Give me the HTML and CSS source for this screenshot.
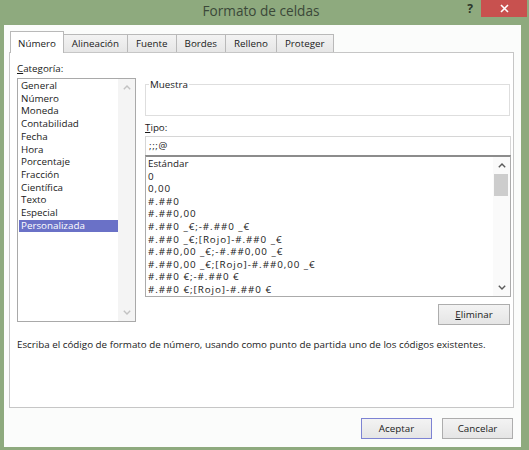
FILE: index.html
```html
<!DOCTYPE html>
<html lang="es">
<head>
<meta charset="utf-8">
<title>Formato de celdas</title>
<link rel="stylesheet" href="styles.css">
</head>
<body>
<div class="window">
  <div class="titlebar">
    <div class="title">Formato de celdas</div>
    <div class="help">?</div>
    <div class="close">
      <svg width="9" height="9" viewBox="0 0 9 9"><path d="M1 1L8 8M8 1L1 8" stroke="#fff" stroke-width="1.6" fill="none"/></svg>
    </div>
  </div>
  <div class="client">
    <div class="tabs">
      <div class="tab sel">Número</div>
      <div class="tab">Alineación</div>
      <div class="tab">Fuente</div>
      <div class="tab">Bordes</div>
      <div class="tab">Relleno</div>
      <div class="tab">Proteger</div>
    </div>
    <div class="panel">
      <div class="cols">
        <div class="leftcol">
          <div class="label"><u>C</u>ategoría:</div>
          <div class="catlist">
            <ul class="catitems">
              <li>General</li>
              <li>Número</li>
              <li>Moneda</li>
              <li>Contabilidad</li>
              <li>Fecha</li>
              <li>Hora</li>
              <li>Porcentaje</li>
              <li>Fracción</li>
              <li>Científica</li>
              <li>Texto</li>
              <li>Especial</li>
              <li class="sel">Personalizada</li>
            </ul>
            <div class="scroll disabled">
              <div class="arrow"><svg width="8" height="5" viewBox="0 0 8 5"><path d="M0.8 4.2L4 1L7.2 4.2" stroke="currentColor" stroke-width="1.4" fill="none"/></svg></div>
              <div class="arrow"><svg width="8" height="5" viewBox="0 0 8 5"><path d="M0.8 0.8L4 4L7.2 0.8" stroke="currentColor" stroke-width="1.4" fill="none"/></svg></div>
            </div>
          </div>
        </div>
        <div class="rightcol">
          <fieldset class="muestra">
            <legend>Muestra</legend>
            <div class="sample"></div>
          </fieldset>
          <div class="label tipo-label"><u>T</u>ipo:</div>
          <div class="tipo">;;;@</div>
          <div class="fmtlist">
            <ul class="fmtitems">
              <li>Estándar</li>
              <li class="code">0</li>
              <li class="code">0,00</li>
              <li class="code">#.##0</li>
              <li class="code">#.##0,00</li>
              <li class="code">#.##0 _€;-#.##0 _€</li>
              <li class="code">#.##0 _€;[Rojo]-#.##0 _€</li>
              <li class="code">#.##0,00 _€;-#.##0,00 _€</li>
              <li class="code">#.##0,00 _€;[Rojo]-#.##0,00 _€</li>
              <li class="code">#.##0 €;-#.##0 €</li>
              <li class="code">#.##0 €;[Rojo]-#.##0 €</li>
            </ul>
            <div class="scroll">
              <div class="arrow"><svg width="8" height="5" viewBox="0 0 8 5"><path d="M0.8 4.2L4 1L7.2 4.2" stroke="currentColor" stroke-width="1.4" fill="none"/></svg></div>
              <div class="thumb"></div>
              <div class="track"></div>
              <div class="arrow"><svg width="8" height="5" viewBox="0 0 8 5"><path d="M0.8 0.8L4 4L7.2 0.8" stroke="currentColor" stroke-width="1.4" fill="none"/></svg></div>
            </div>
          </div>
          <div class="btn eliminar"><u>E</u>liminar</div>
        </div>
      </div>
      <p class="desc">Escriba el código de formato de número, usando como punto de partida uno de los códigos existentes.</p>
    </div>
    <div class="buttons">
      <div class="btn default">Aceptar</div>
      <div class="btn">Cancelar</div>
    </div>
  </div>
</div>
</body>
</html>
```
FILE: styles.css
```css
* { box-sizing: border-box; }
html, body { margin: 0; padding: 0; }
body {
  width: 529px;
  height: 450px;
  overflow: hidden;
  background: #8eaa7e;
  font-family: "Open Sans", "Liberation Sans", sans-serif;
  font-size: 9.8px;
  color: #1a1a1a;
}
.window { width: 529px; height: 450px; display: flex; flex-direction: column; }

.titlebar { height: 25px; display: flex; align-items: flex-start; }
.title {
  flex: 1;
  padding-left: 60px;
  text-align: center;
  font-size: 13.6px;
  line-height: 22px;
  color: #3b4839;
}
.help {
  width: 16px;
  margin: 2px 3px 0 0;
  font-weight: bold;
  font-size: 12px;
  line-height: 14px;
  text-align: center;
  color: #2c372b;
}
.close {
  width: 46px;
  height: 17px;
  margin-right: 2px;
  background: #c8514f;
  display: flex;
  align-items: center;
  justify-content: center;
}

.client {
  flex: 1;
  margin: 0 8px 3px 4px;
  background: #fbfcfb;
  padding: 6px 7px 8px 0;
  display: flex;
  flex-direction: column;
}

.tabs {
  display: flex;
  align-items: flex-end;
  height: 21px;
  margin-left: 6px;
  position: relative;
  z-index: 1;
}
.tab {
  height: 18px;
  padding: 0 8px;
  line-height: 17px;
  border: 1px solid #b9b9b9;
  border-bottom: none;
  margin-left: -1px;
  background: linear-gradient(#f3f3f3, #e6e6e6);
  white-space: nowrap;
}
.tab:first-child { margin-left: 0; }
.tab.sel {
  height: 22px;
  margin-bottom: -1px;
  padding: 5px 7px 0;
  line-height: 14px;
  background: #fff;
}

.panel {
  flex: 1;
  margin-left: 5px;
  border: 1px solid #c6c6c6;
  background: #fff;
  padding: 9px 2px 0 7px;
  display: flex;
  flex-direction: column;
}
.cols { display: flex; gap: 9px; }
.leftcol { width: 119px; display: flex; flex-direction: column; }
.label { line-height: 13px; height: 13px; margin-bottom: 3px; }

.catlist {
  height: 244px;
  border: 1px solid #a9a9a9;
  display: flex;
}
.catitems {
  flex: 1;
  list-style: none;
  margin: 0;
  padding: 1px 0 0 1px;
}
.catitems li { line-height: 12.7px; padding-left: 2px; white-space: nowrap; }
.catitems li.sel { background: #6a71c7; color: #fff; }

.scroll {
  width: 17px;
  background: #f4f4f4;
  display: flex;
  flex-direction: column;
  color: #5a5a5a;
}
.scroll.disabled { color: #c2c2c2; justify-content: space-between; }
.arrow { height: 17px; display: flex; align-items: center; justify-content: center; }
.thumb { height: 22px; margin: 0 2px 0 1px; background: #cdcdcd; }
.track { flex: 1; }

.rightcol { flex: 1; display: flex; flex-direction: column; }
.muestra {
  margin: 16px 1px 0 0;
  padding: 0;
  border: 1px solid #dedede;
  min-width: 0;
}
.muestra legend { padding: 0 1px; margin-left: 3px; line-height: 13px; }
.sample { height: 24px; }
.tipo-label { margin: 5px 0 2px; }
.tipo {
  height: 19px;
  border: 1px solid #d6d6d6;
  border-bottom: none;
  padding-left: 3px;
  line-height: 17px;
  letter-spacing: 0.6px;
}
.fmtlist {
  height: 142px;
  border: 1px solid #ababab;
  border-top: 2px solid #8c8c8c;
  display: flex;
}
.fmtitems {
  flex: 1;
  list-style: none;
  margin: 0;
  padding: 1px 0 0 2px;
}
.fmtitems li { line-height: 12.6px; white-space: nowrap; }
.fmtitems li.code { letter-spacing: 0.95px; }
.fmtlist .scroll { background: #fafafa; }

.btn {
  width: 71px;
  height: 21px;
  border: 1px solid #adadad;
  background: linear-gradient(#f3f3f3, #e5e5e5);
  text-align: center;
  line-height: 19px;
}
.btn.default { border-color: #7d83d3; }
.eliminar { align-self: flex-end; width: 72px; margin: 7px 1px 0 0; }

.desc { margin: 13px 0 0; line-height: 14px; white-space: nowrap; }

.buttons {
  display: flex;
  justify-content: flex-end;
  gap: 10px;
  margin: 10px 1px 0 0;
}
```
